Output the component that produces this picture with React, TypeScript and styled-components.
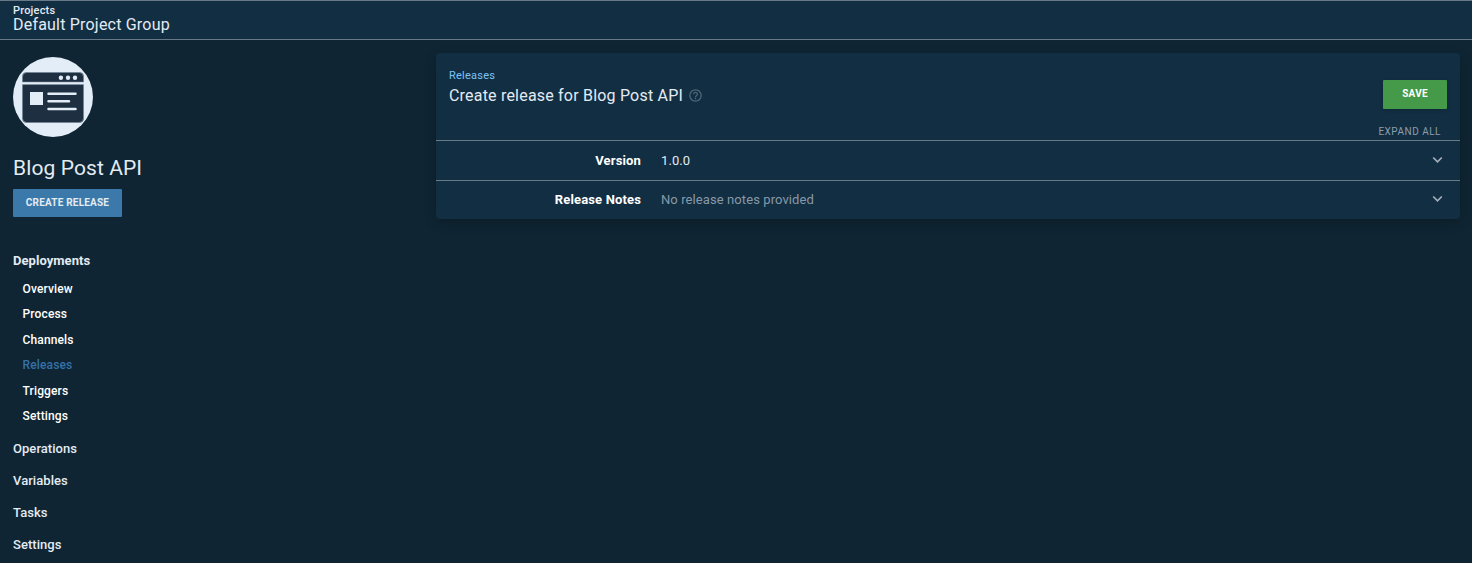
import React from "react";
import styled, { createGlobalStyle } from "styled-components";
import { MdHelpOutline } from "react-icons/md";

const GlobalStyle = createGlobalStyle`
  * { box-sizing: border-box; }
  body {
    margin: 0;
    background: #0f2533;
    color: #e3ebf3;
    font-family: Roboto, "Liberation Sans", sans-serif;
    font-size: 13px;
    overflow: hidden;
  }
`;

const Page = styled.div`
  height: 563px;
  display: flex;
  flex-direction: column;
`;

const Header = styled.header`
  height: 40px;
  padding: 3px 13px 0;
  background: #122e43;
  border-top: 1px solid #687a88;
  border-bottom: 1px solid #687a88;
`;

const HeaderLink = styled.div`
  font-size: 11px;
  line-height: 13px;
  font-weight: 500;
  letter-spacing: 0.2px;
`;

const HeaderTitle = styled.div`
  font-size: 16px;
  line-height: 16px;
  letter-spacing: 0.2px;
`;

const Content = styled.div`
  display: flex;
  flex: 1;
`;

const Sidebar = styled.aside`
  width: 436px;
  padding: 17px 13px 0;
  display: flex;
  flex-direction: column;
  align-items: flex-start;
`;

const Logo = styled.svg`
  display: block;
  width: 80px;
  height: 80px;
`;

const ProjectName = styled.h1`
  margin: 19px 0 9px;
  font-size: 21px;
  line-height: 24px;
  font-weight: 400;
  letter-spacing: 0.1px;
`;

const Button = styled.button<{ $tone: "blue" | "green" }>`
  width: ${(p) => (p.$tone === "blue" ? 109 : 64)}px;
  height: ${(p) => (p.$tone === "blue" ? 28 : 29)}px;
  padding: 0;
  border: 0;
  border-radius: 1px;
  background: ${(p) => (p.$tone === "blue" ? "#3a79aa" : "#449a48")};
  box-shadow: ${(p) => (p.$tone === "blue" ? "none" : "0 1px 4px rgba(0, 0, 0, 0.2)")};
  color: ${(p) => (p.$tone === "blue" ? "#e3ebf3" : "#ffffff")};
  font-family: inherit;
  font-size: 10px;
  line-height: 27px;
  letter-spacing: 0.2px;
  font-weight: 700;
  text-transform: uppercase;
  display: flex;
  justify-content: center;
  align-items: flex-start;
`;

const Nav = styled.nav`
  margin-top: 28px;
`;

const NavItem = styled.div<{ $strong?: boolean }>`
  height: 32px;
  line-height: 32px;
  font-size: 13px;
  letter-spacing: 0.05px;
  font-weight: ${(p) => (p.$strong ? 700 : 500)};
`;

const SubNav = styled.div`
  padding: 0 0 4px 9.6px;
`;

const SubItem = styled.div<{ $active?: boolean }>`
  height: 25.4px;
  line-height: 25.4px;
  font-size: 12px;
  letter-spacing: 0.12px;
  font-weight: 500;
  color: ${(p) => (p.$active ? "#3571a8" : "#ffffff")};
`;

const Card = styled.main`
  width: 1024px;
  height: 166px;
  margin-top: 13px;
  background: #122e43;
  border-radius: 4px;
  box-shadow: 0 4px 12px rgba(0, 0, 0, 0.22);
`;

const CardHeader = styled.div`
  height: 87px;
  padding: 15px 13px 0;
  display: flex;
  justify-content: space-between;
`;

const Breadcrumb = styled.div`
  padding-top: 1px;
  font-size: 11px;
  line-height: 14px;
  letter-spacing: 0.25px;
  color: #7cc4f8;
`;

const CardTitle = styled.h2`
  margin: 3px 0 0;
  display: flex;
  align-items: center;
  gap: 5px;
  font-size: 16px;
  line-height: 20px;
  letter-spacing: 0.2px;
  font-weight: 400;
  svg {
    color: #506679;
    margin-bottom: 2px;
  }
`;

const Actions = styled.div`
  display: flex;
  flex-direction: column;
  align-items: flex-end;
  padding-top: 12px;
`;

const ExpandAll = styled.div`
  margin: 16px 6px 0 0;
  font-size: 10px;
  line-height: 14px;
  letter-spacing: 0.5px;
  color: #8c9dab;
`;

const Row = styled.div<{ $height: number }>`
  height: ${(p) => p.$height}px;
  border-top: 1px solid #687a88;
  padding-right: 17px;
  display: flex;
  align-items: center;
`;

const RowLabel = styled.div`
  width: 205px;
  margin-right: 20px;
  text-align: right;
  font-weight: 700;
  letter-spacing: 0.15px;
  color: #ffffff;
`;

const RowValue = styled.div<{ $muted?: boolean }>`
  flex: 1;
  letter-spacing: 0.09px;
  color: ${(p) => (p.$muted ? "#8899a7" : "#e3ebf3")};
`;

const RowChevron = styled.svg`
  margin-bottom: 1px;
`;

const Chevron = () => (
  <RowChevron width="11" height="8" viewBox="0 0 11 8" fill="none" stroke="#a5b1bc" strokeWidth="1.7">
    <path d="M1.2 1.5 5.5 5.8 9.8 1.5" />
  </RowChevron>
);

const ProjectLogo = () => (
  <Logo viewBox="0 0 80 80">
    <circle cx="40" cy="40" r="40" fill="#e3edf7" />
    <rect x="9.5" y="15.5" width="61" height="50" rx="4" fill="#1d2f40" stroke="#748797" />
    <path d="M9 26.3H71" stroke="#e3edf7" strokeWidth="2.4" />
    <path d="M9 25H71M9 27.6H71" stroke="#8496a5" strokeWidth=".5" />
    <g fill="#e3edf7">
      <circle cx="47.9" cy="20.7" r="2.2" />
      <circle cx="55" cy="20.7" r="2.2" />
      <circle cx="62" cy="20.7" r="2.2" />
      <rect x="17" y="35" width="13" height="13" />
    </g>
    <path d="M35.5 36.8H62.5M35.5 44.3H56M35.5 52H62.5" stroke="#e3edf7" strokeWidth="2.5" strokeLinecap="round" />
  </Logo>
);

const deploymentPages = ["Overview", "Process", "Channels", "Releases", "Triggers", "Settings"];
const sections = ["Operations", "Variables", "Tasks", "Settings"];

export default function App() {
  return (
    <Page>
      <GlobalStyle />
      <Header>
        <HeaderLink>Projects</HeaderLink>
        <HeaderTitle>Default Project Group</HeaderTitle>
      </Header>
      <Content>
        <Sidebar>
          <ProjectLogo />
          <ProjectName>Blog Post API</ProjectName>
          <Button $tone="blue">Create release</Button>
          <Nav>
            <NavItem $strong>Deployments</NavItem>
            <SubNav>
              {deploymentPages.map((label) => (
                <SubItem key={label} $active={label === "Releases"}>{label}</SubItem>
              ))}
            </SubNav>
            {sections.map((label) => (
              <NavItem key={label}>{label}</NavItem>
            ))}
          </Nav>
        </Sidebar>
        <Card>
          <CardHeader>
            <div>
              <Breadcrumb>Releases</Breadcrumb>
              <CardTitle>
                Create release for Blog Post API
                <MdHelpOutline size={15} />
              </CardTitle>
            </div>
            <Actions>
              <Button $tone="green">Save</Button>
              <ExpandAll>EXPAND ALL</ExpandAll>
            </Actions>
          </CardHeader>
          <Row $height={40}>
            <RowLabel>Version</RowLabel>
            <RowValue>1.0.0</RowValue>
            <Chevron />
          </Row>
          <Row $height={38}>
            <RowLabel>Release Notes</RowLabel>
            <RowValue $muted>No release notes provided</RowValue>
            <Chevron />
          </Row>
        </Card>
      </Content>
    </Page>
  );
}
